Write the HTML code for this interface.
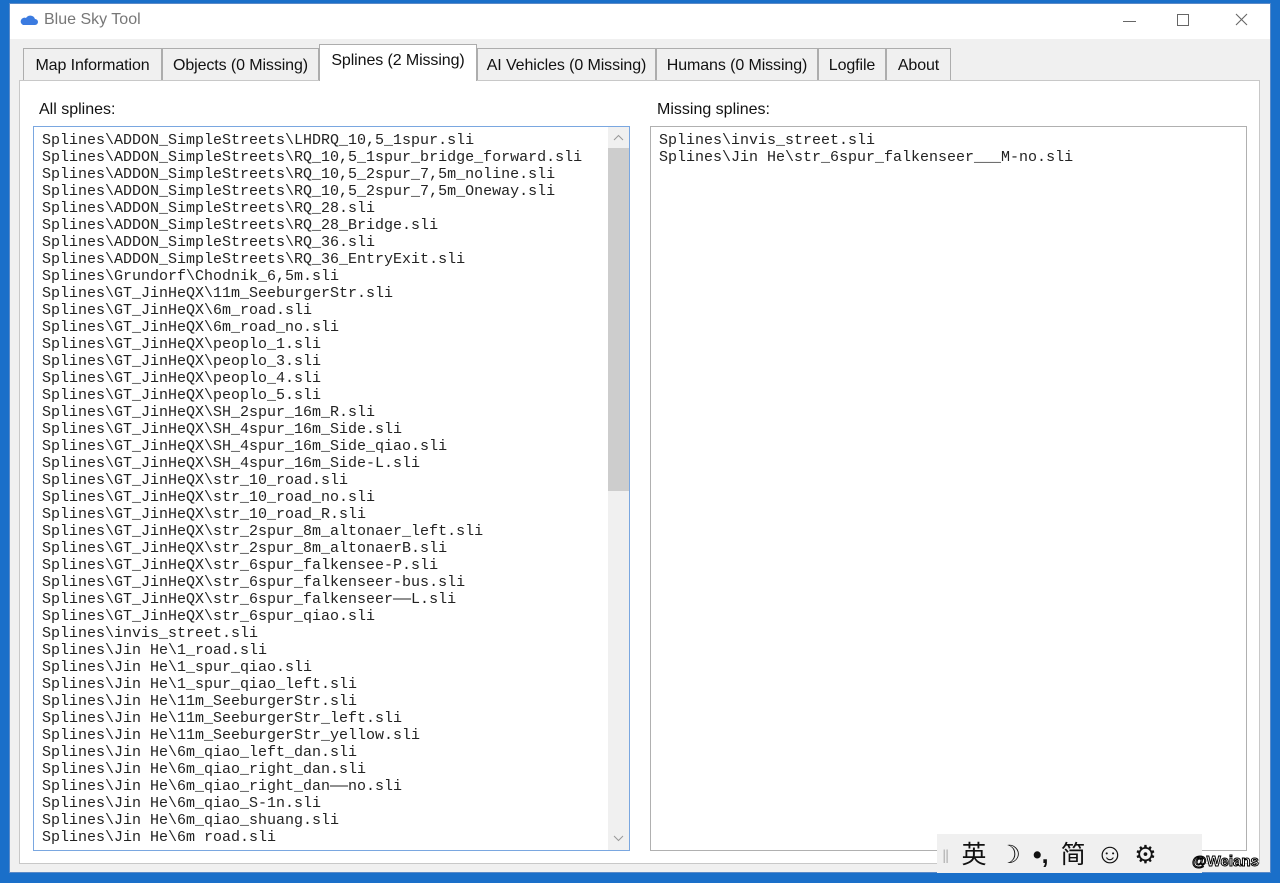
<!DOCTYPE html>
<html><head><meta charset="utf-8"><style>
*{margin:0;padding:0;box-sizing:border-box}
body{width:1280px;height:883px;background:#1a6fc9;position:relative;overflow:hidden;font-family:"Liberation Sans","Noto Sans CJK SC",sans-serif;}
.win{position:absolute;left:9px;top:3px;width:1262px;height:870px;background:#f0f0f0;border:1px solid #5a8ac8}
.title{position:absolute;left:0;top:0;width:100%;height:35px;background:#fff}
.title .t{position:absolute;left:34px;top:7px;font-size:16px;color:#777}
.tab{position:absolute;top:48px;height:33px;border:1px solid #adadad;border-bottom:none;background:#f0f0f0;font-size:16px;color:#111;padding:8px 0 0 0;text-align:center;white-space:nowrap;letter-spacing:-0.1px}
.tab.sel{top:44px;height:37px;background:#fff;padding-top:7px;z-index:2}
.lbl{position:absolute;font-size:16px;color:#111}
.list{position:absolute;top:123px;height:725px;background:#fff;border:1px solid #b0b0b0;overflow:hidden}
.list pre{font-family:"Liberation Mono",monospace;font-size:15px;line-height:17px;color:#222;padding:5px 0 0 8px}
</style></head><body>
<div class="win">
 <div class="title">
  <svg style="position:absolute;left:10px;top:10px" width="18" height="12" viewBox="0 0 18 12"><path d="M3 11h12a3 3 0 0 0 0-6 5 5 0 0 0-9-1 3.5 3.5 0 0 0-3 7z" fill="#3b7be0"/></svg>
  <div class="t">Blue Sky Tool</div>
  <div style="position:absolute;left:1113px;top:17px;width:13px;height:1px;background:#666"></div>
  <div style="position:absolute;left:1167px;top:10px;width:12px;height:12px;border:1px solid #666"></div>
  <svg style="position:absolute;left:1225px;top:9px" width="13" height="13" viewBox="0 0 13 13"><path d="M1 1L12 12M12 1L1 12" stroke="#666" stroke-width="1.1"/></svg>
 </div>
</div>
<div class="tab" style="left:23px;width:139px">Map Information</div>
<div class="tab" style="left:162px;width:157px">Objects (0 Missing)</div>
<div class="tab sel" style="left:319px;width:158px">Splines (2 Missing)</div>
<div class="tab" style="left:477px;width:179px">AI Vehicles (0 Missing)</div>
<div class="tab" style="left:656px;width:162px">Humans (0 Missing)</div>
<div class="tab" style="left:818px;width:68px">Logfile</div>
<div class="tab" style="left:886px;width:65px">About</div>
<div style="position:absolute;left:19px;top:80px;width:1241px;height:784px;background:#fff;border:1px solid #c8c8c8"></div>
<div class="lbl" style="left:39px;top:101px">All splines:</div>
<div class="lbl" style="left:657px;top:101px">Missing splines:</div>
<div class="list" style="left:33px;top:126px;width:597px;border-color:#7aa7e0">
<pre>Splines\ADDON_SimpleStreets\LHDRQ_10,5_1spur.sli
Splines\ADDON_SimpleStreets\RQ_10,5_1spur_bridge_forward.sli
Splines\ADDON_SimpleStreets\RQ_10,5_2spur_7,5m_noline.sli
Splines\ADDON_SimpleStreets\RQ_10,5_2spur_7,5m_Oneway.sli
Splines\ADDON_SimpleStreets\RQ_28.sli
Splines\ADDON_SimpleStreets\RQ_28_Bridge.sli
Splines\ADDON_SimpleStreets\RQ_36.sli
Splines\ADDON_SimpleStreets\RQ_36_EntryExit.sli
Splines\Grundorf\Chodnik_6,5m.sli
Splines\GT_JinHeQX\11m_SeeburgerStr.sli
Splines\GT_JinHeQX\6m_road.sli
Splines\GT_JinHeQX\6m_road_no.sli
Splines\GT_JinHeQX\peoplo_1.sli
Splines\GT_JinHeQX\peoplo_3.sli
Splines\GT_JinHeQX\peoplo_4.sli
Splines\GT_JinHeQX\peoplo_5.sli
Splines\GT_JinHeQX\SH_2spur_16m_R.sli
Splines\GT_JinHeQX\SH_4spur_16m_Side.sli
Splines\GT_JinHeQX\SH_4spur_16m_Side_qiao.sli
Splines\GT_JinHeQX\SH_4spur_16m_Side-L.sli
Splines\GT_JinHeQX\str_10_road.sli
Splines\GT_JinHeQX\str_10_road_no.sli
Splines\GT_JinHeQX\str_10_road_R.sli
Splines\GT_JinHeQX\str_2spur_8m_altonaer_left.sli
Splines\GT_JinHeQX\str_2spur_8m_altonaerB.sli
Splines\GT_JinHeQX\str_6spur_falkensee-P.sli
Splines\GT_JinHeQX\str_6spur_falkenseer-bus.sli
Splines\GT_JinHeQX\str_6spur_falkenseer——L.sli
Splines\GT_JinHeQX\str_6spur_qiao.sli
Splines\invis_street.sli
Splines\Jin He\1_road.sli
Splines\Jin He\1_spur_qiao.sli
Splines\Jin He\1_spur_qiao_left.sli
Splines\Jin He\11m_SeeburgerStr.sli
Splines\Jin He\11m_SeeburgerStr_left.sli
Splines\Jin He\11m_SeeburgerStr_yellow.sli
Splines\Jin He\6m_qiao_left_dan.sli
Splines\Jin He\6m_qiao_right_dan.sli
Splines\Jin He\6m_qiao_right_dan——no.sli
Splines\Jin He\6m_qiao_S-1n.sli
Splines\Jin He\6m_qiao_shuang.sli
Splines\Jin He\6m road.sli</pre>
<div style="position:absolute;left:574px;top:0;width:21px;height:723px;background:#f0f0f0"></div>
<div style="position:absolute;left:574px;top:21px;width:21px;height:343px;background:#cdcdcd"></div>
<svg style="position:absolute;left:579px;top:7px" width="11" height="7"><path d="M1 6L5.5 1.5L10 6" stroke="#999" fill="none"/></svg>
<svg style="position:absolute;left:579px;top:708px" width="11" height="7"><path d="M1 1L5.5 5.5L10 1" stroke="#999" fill="none"/></svg>
</div>
<div class="list" style="left:650px;top:126px;width:597px">
<pre>Splines\invis_street.sli
Splines\Jin He\str_6spur_falkenseer___M-no.sli</pre>
</div>
<div style="position:absolute;left:937px;top:834px;width:265px;height:39px;background:#f0f0f0;font-size:25px;color:#111;white-space:nowrap;line-height:39px">
<span style="color:#bbb;font-size:18px;margin-left:5px">‖</span><span style="margin-left:12px">英</span><span style="margin-left:12px">☽</span><span style="margin-left:12px;font-weight:bold">•,</span><span style="margin-left:12px">简</span><span style="margin-left:10px;font-size:28px">☺</span><span style="margin-left:10px">⚙</span>
</div>
<div style="position:absolute;left:1192px;top:853px;font-size:15px;font-weight:bold;color:#fff;-webkit-text-stroke:1px #000">@Weians</div>
</body></html>
